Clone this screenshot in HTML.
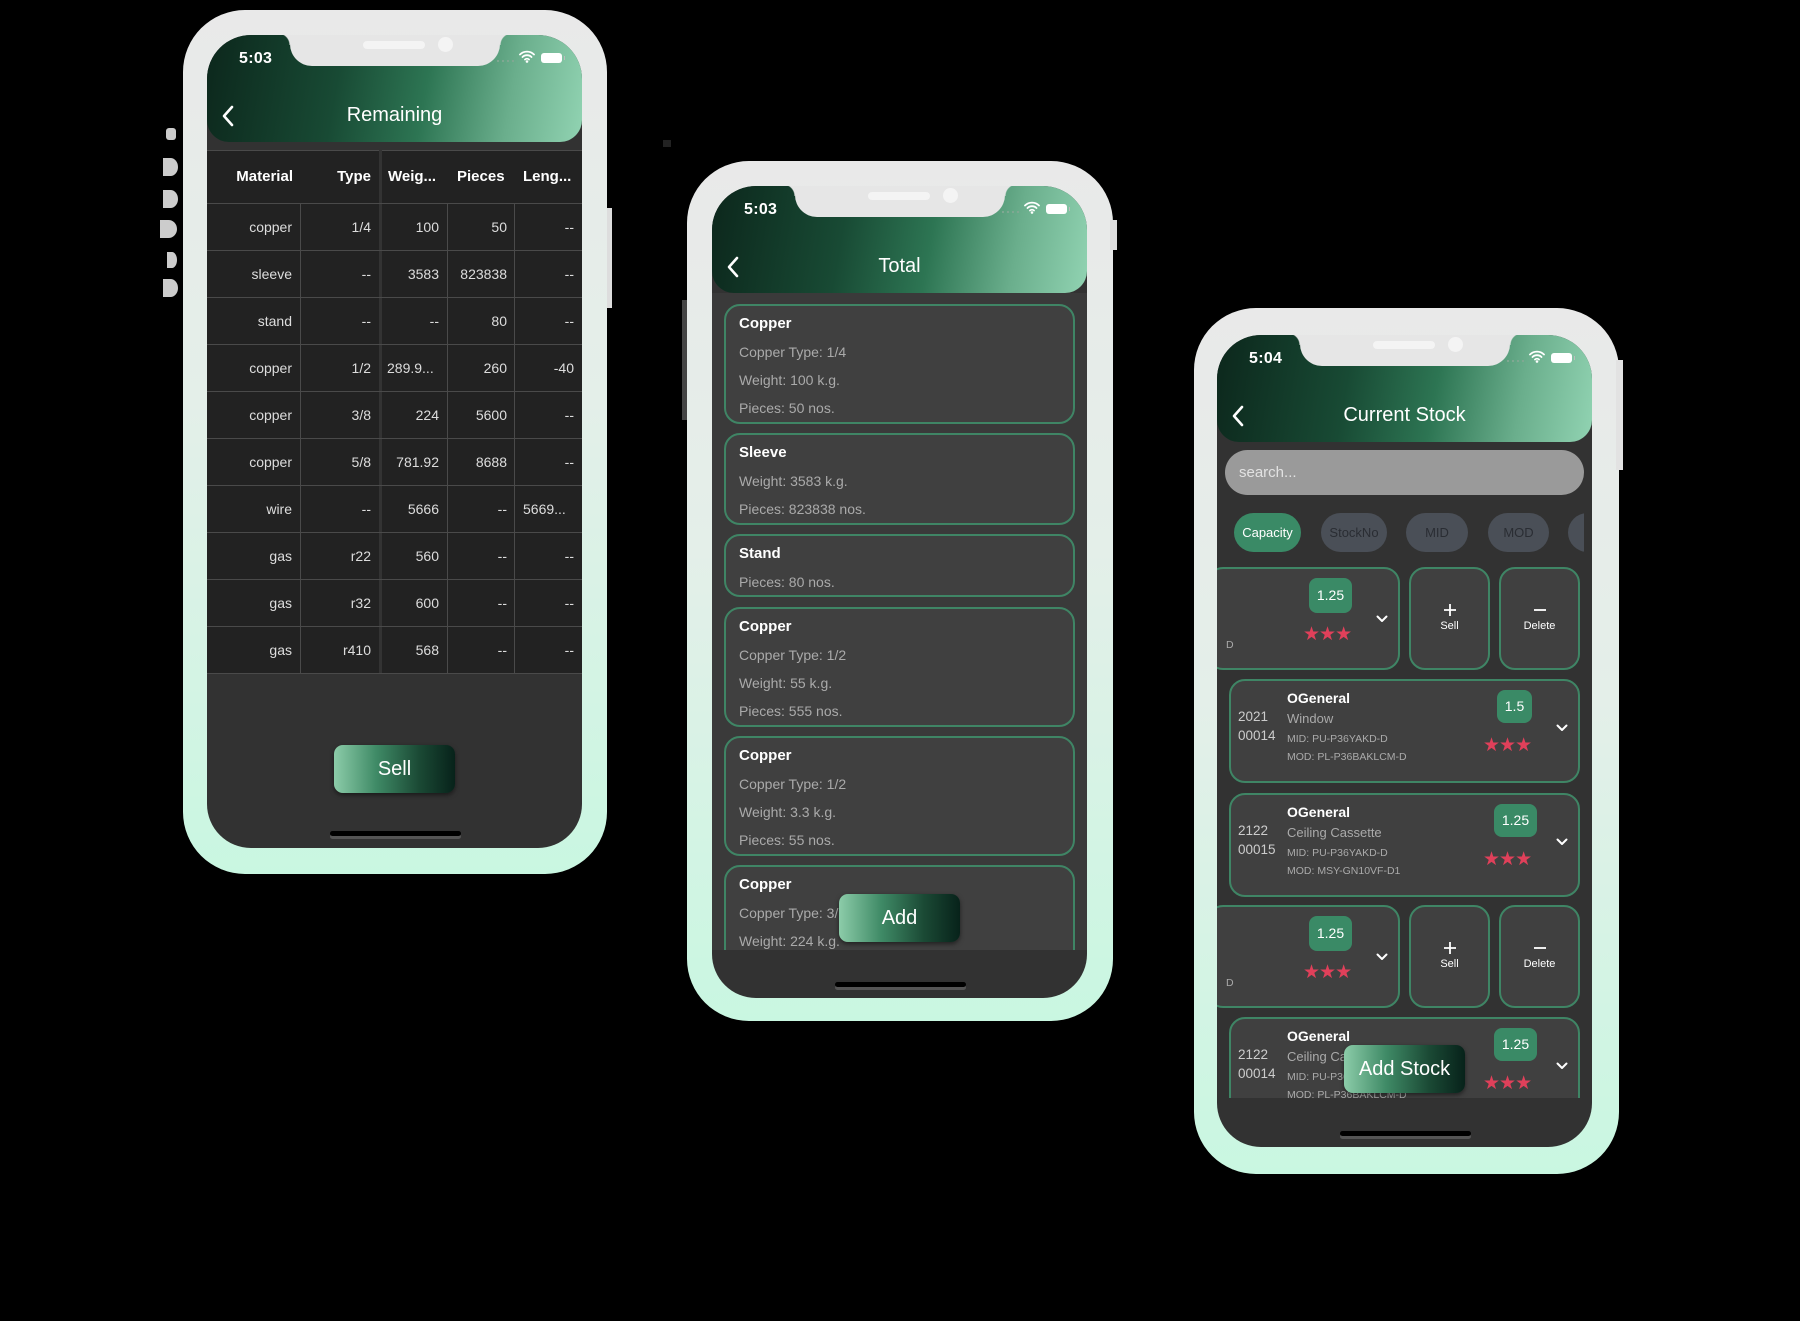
<!DOCTYPE html>
<html><head><meta charset="utf-8">
<style>
*{box-sizing:border-box;margin:0;padding:0}
html,body{width:1800px;height:1321px;background:#000;overflow:hidden;font-family:"Liberation Sans",sans-serif}
.frame{position:absolute;border-radius:62px;background:linear-gradient(180deg,#e9e9e9 0%,#e4efe9 45%,#c9f7e1 100%)}
.screen{position:absolute;width:375px;border-radius:44px;overflow:hidden;background:#323232}
.hdr{position:absolute;left:0;top:0;width:375px;height:107px;border-radius:0 0 22px 22px;background:linear-gradient(100deg,#0c271c 0%,#184a34 35%,#2d7553 58%,#6aae8c 80%,#91d3b2 100%)}
.notch{position:absolute;left:83px;top:-2px;width:210px;height:33px;background:#e6e6e6;border-radius:0 0 22px 22px}
.notch:before{content:"";position:absolute;left:-12px;top:0;width:12px;height:12px;background:radial-gradient(circle at 0 100%,transparent 11px,#e6e6e6 12px)}
.notch:after{content:"";position:absolute;right:-12px;top:0;width:12px;height:12px;background:radial-gradient(circle at 100% 100%,transparent 11px,#e6e6e6 12px)}
.spk{position:absolute;left:73px;top:8px;width:62px;height:8px;border-radius:4px;background:#f4f4f4}
.cam{position:absolute;left:148px;top:4px;width:15px;height:15px;border-radius:50%;background:#f4f4f4}
.time{position:absolute;left:32px;top:15px;color:#fff;font-size:16px;font-weight:bold;letter-spacing:.3px}
.dots{position:absolute;left:290px;top:25px;width:20px;height:2px;background:repeating-linear-gradient(90deg,#7fa892 0 2px,transparent 2px 5px)}
.bat{position:absolute;left:334px;top:18px;width:21px;height:10px;border-radius:3px;background:#fff}
.bat:after{content:"";position:absolute;right:-3px;top:3px;width:1px;height:4px;background:#bbb}
.wifi{position:absolute;left:312px;top:15px}
.back{position:absolute;left:14px;top:70px}
.title{position:absolute;left:0;width:375px;top:69px;text-align:center;color:#fff;font-size:20px}
.home{position:absolute;left:123px;width:131px;height:5px;border-radius:3px;background:#000;box-shadow:0 3px 0 #555}
.btn{position:absolute;width:121px;height:48px;border-radius:9px;background:linear-gradient(90deg,#8ccca9 0%,#3f8a66 35%,#1b4a35 70%,#07221a 100%);color:#fff;font-size:20px;text-align:center;line-height:48px;box-shadow:0 2px 5px rgba(0,0,0,.5)}
.tbl{position:absolute;left:0;top:115px;width:375px;height:524px;background:#222}
.hl{position:absolute;left:0;width:375px;height:1px;background:#4a4a4a}
.vl{position:absolute;width:1px;background:#4a4a4a}
.c{position:absolute;color:#ddd;font-size:14px;text-align:right;line-height:18px}
.h{position:absolute;color:#fff;font-size:15px;font-weight:bold;line-height:18px}
.card{position:absolute;left:12px;width:351px;border:2px solid #3f8565;border-radius:16px;background:#404040}
.ct{position:absolute;left:13px;color:#fff;font-weight:bold;font-size:15px;line-height:18px}
.cl{position:absolute;left:13px;color:#aaa;font-size:14px;line-height:18px}
.srch{position:absolute;left:8px;top:115px;width:359px;height:45px;border-radius:23px;background:#9a9a9a;color:#e2e2e2;font-size:15px;line-height:45px;padding-left:14px}
.chip{position:absolute;top:178px;height:39px;border-radius:20px;background:#4a4f57;color:#2a2d33;font-size:13px;line-height:39px;text-align:center}
.row{position:absolute;border:2px solid #3f8565;border-radius:16px;background:#404040}
.bdg{position:absolute;border-radius:8px;background:#3a8a66;color:#fff;font-size:14px;text-align:center}
.stars{position:absolute;color:#e0405a;font-size:19px;letter-spacing:-1px;line-height:18px}
.chev{position:absolute}
.t1{position:absolute;color:#fff;font-weight:bold;font-size:14px;line-height:16px}
.t2{position:absolute;color:#aaa;font-size:13px;line-height:16px}
.t3{position:absolute;color:#aaa;font-size:10.5px;line-height:14px}
.yr{position:absolute;color:#ccc;font-size:13.5px;line-height:16px}
.act{position:absolute;text-align:center;color:#fff;font-size:11px}
.blob{position:absolute;background:#ccc;border-radius:50%}
</style></head><body>

<div class="blob" style="left:166px;top:128px;width:10px;height:12px;border-radius:3px"></div>
<div class="blob" style="left:163px;top:158px;width:15px;height:18px;border-radius:0 50% 50% 0"></div>
<div class="blob" style="left:163px;top:190px;width:15px;height:18px;border-radius:0 50% 50% 0"></div>
<div class="blob" style="left:160px;top:220px;width:17px;height:18px;border-radius:0 50% 50% 0"></div>
<div class="blob" style="left:167px;top:252px;width:10px;height:16px;border-radius:0 50% 50% 0"></div>
<div class="blob" style="left:163px;top:279px;width:15px;height:18px;border-radius:0 50% 50% 0"></div>
<div style="position:absolute;left:604px;top:208px;width:8px;height:100px;background:#ddd"></div>
<div style="position:absolute;left:663px;top:140px;width:8px;height:7px;background:#222"></div>

<!-- PHONE 1 -->
<div class="frame" style="left:183px;top:10px;width:424px;height:864px"></div>
<div class="screen" style="left:207px;top:35px;height:813px">
  <div class="hdr"></div>
  <div class="notch"><div class="spk"></div><div class="cam"></div></div>
  <div class="time">5:03</div>
  <div class="dots"></div>
  <svg class="wifi" width="16" height="13" viewBox="0 0 16 13"><path d="M1 4.5A10 10 0 0 1 15 4.5M3.5 7A6.5 6.5 0 0 1 12.5 7M6 9.5a3 3 0 0 1 4 0" fill="none" stroke="#fff" stroke-width="1.8" stroke-linecap="round"/><circle cx="8" cy="11.5" r="1.3" fill="#fff"/></svg>
  <div class="bat"></div>
  <svg class="back" width="14" height="22" viewBox="0 0 14 22"><path d="M11 2L3 11l8 9" fill="none" stroke="#fff" stroke-width="2.6" stroke-linecap="round" stroke-linejoin="round"/></svg>
  <div class="title">Remaining</div>
  <div class="tbl">
    <div class="hl" style="top:0"></div>
    <div class="h" style="left:0;width:86px;top:18px;text-align:right">Material</div>
    <div class="h" style="left:90px;width:74px;top:18px;text-align:right">Type</div>
    <div class="h" style="left:181px;top:18px">Weig...</div>
    <div class="h" style="left:250px;top:18px">Pieces</div>
    <div class="h" style="left:316px;top:18px">Leng...</div>
    <div class="vl" style="left:172px;top:0;height:524px;width:3px;background:#333"></div>
    <div class="vl" style="left:93px;top:53px;height:471px"></div>
    <div class="vl" style="left:240px;top:53px;height:471px"></div>
    <div class="vl" style="left:307px;top:53px;height:471px"></div>
    <div class="hl" style="top:53px"></div><div class="hl" style="top:100px"></div><div class="hl" style="top:147px"></div><div class="hl" style="top:194px"></div><div class="hl" style="top:241px"></div><div class="hl" style="top:288px"></div><div class="hl" style="top:335px"></div><div class="hl" style="top:382px"></div><div class="hl" style="top:429px"></div><div class="hl" style="top:476px"></div><div class="hl" style="top:523px"></div>
  </div>
  <div id="rows1"></div>
  <div class="btn" style="left:127px;top:710px">Sell</div>
  <div class="home" style="top:796px"></div>
</div>

<!-- PHONE 2 -->
<div style="position:absolute;left:682px;top:300px;width:8px;height:120px;background:#444"></div>
<div class="frame" style="left:687px;top:161px;width:426px;height:860px"></div>
<div style="position:absolute;left:1110px;top:220px;width:7px;height:30px;background:#ddd"></div>
<div class="screen" style="left:712px;top:186px;height:812px">
  <div class="hdr"></div>
  <div class="notch"><div class="spk"></div><div class="cam"></div></div>
  <div class="time">5:03</div>
  <div class="dots"></div>
  <svg class="wifi" width="16" height="13" viewBox="0 0 16 13"><path d="M1 4.5A10 10 0 0 1 15 4.5M3.5 7A6.5 6.5 0 0 1 12.5 7M6 9.5a3 3 0 0 1 4 0" fill="none" stroke="#fff" stroke-width="1.8" stroke-linecap="round"/><circle cx="8" cy="11.5" r="1.3" fill="#fff"/></svg>
  <div class="bat"></div>
  <svg class="back" width="14" height="22" viewBox="0 0 14 22"><path d="M11 2L3 11l8 9" fill="none" stroke="#fff" stroke-width="2.6" stroke-linecap="round" stroke-linejoin="round"/></svg>
  <div class="title">Total</div>
  <div style="position:absolute;left:0;top:107px;width:375px;height:657px;background:#3a3a3a;overflow:hidden">
    <div class="card" style="top:11px;height:120px"><div class="ct" style="top:9px">Copper</div><div class="cl" style="top:37px">Copper Type: 1/4</div><div class="cl" style="top:65px">Weight: 100 k.g.</div><div class="cl" style="top:93px">Pieces: 50 nos.</div></div>
    <div class="card" style="top:140px;height:92px"><div class="ct" style="top:9px">Sleeve</div><div class="cl" style="top:37px">Weight: 3583 k.g.</div><div class="cl" style="top:65px">Pieces: 823838 nos.</div></div>
    <div class="card" style="top:241px;height:63px"><div class="ct" style="top:9px">Stand</div><div class="cl" style="top:37px">Pieces: 80 nos.</div></div>
    <div class="card" style="top:314px;height:120px"><div class="ct" style="top:9px">Copper</div><div class="cl" style="top:37px">Copper Type: 1/2</div><div class="cl" style="top:65px">Weight: 55 k.g.</div><div class="cl" style="top:93px">Pieces: 555 nos.</div></div>
    <div class="card" style="top:443px;height:120px"><div class="ct" style="top:9px">Copper</div><div class="cl" style="top:37px">Copper Type: 1/2</div><div class="cl" style="top:65px">Weight: 3.3 k.g.</div><div class="cl" style="top:93px">Pieces: 55 nos.</div></div>
    <div class="card" style="top:572px;height:120px"><div class="ct" style="top:9px">Copper</div><div class="cl" style="top:37px">Copper Type: 3/8</div><div class="cl" style="top:65px">Weight: 224 k.g.</div></div>
  </div>
  <div class="btn" style="left:127px;top:708px">Add</div>
  <div class="home" style="top:796px"></div>
</div>

<!-- PHONE 3 -->
<div class="frame" style="left:1194px;top:308px;width:425px;height:866px"></div>
<div style="position:absolute;left:1616px;top:360px;width:7px;height:110px;background:#e2e2e2"></div>
<div class="screen" style="left:1217px;top:335px;height:812px">
  <div class="hdr"></div>
  <div class="notch"><div class="spk"></div><div class="cam"></div></div>
  <div class="time">5:04</div>
  <div class="dots"></div>
  <svg class="wifi" width="16" height="13" viewBox="0 0 16 13"><path d="M1 4.5A10 10 0 0 1 15 4.5M3.5 7A6.5 6.5 0 0 1 12.5 7M6 9.5a3 3 0 0 1 4 0" fill="none" stroke="#fff" stroke-width="1.8" stroke-linecap="round"/><circle cx="8" cy="11.5" r="1.3" fill="#fff"/></svg>
  <div class="bat"></div>
  <svg class="back" width="14" height="22" viewBox="0 0 14 22"><path d="M11 2L3 11l8 9" fill="none" stroke="#fff" stroke-width="2.6" stroke-linecap="round" stroke-linejoin="round"/></svg>
  <div class="title">Current Stock</div>
  <div class="srch">search...</div>
  <div class="chip" style="left:17px;width:67px;background:#3a8a66;color:#fff">Capacity</div>
  <div class="chip" style="left:104px;width:66px">StockNo</div>
  <div class="chip" style="left:189px;width:62px">MID</div>
  <div class="chip" style="left:271px;width:61px">MOD</div>
  <div style="position:absolute;left:351px;top:178px;width:16px;height:39px;overflow:hidden"><div class="chip" style="left:0;top:0;width:40px"></div></div>
  <div style="position:absolute;left:0;top:225px;width:375px;height:538px;overflow:hidden;background:#323232" id="list"></div>
  <div class="btn" style="left:127px;top:710px">Add Stock</div>
  <div class="home" style="top:796px"></div>
</div>

<script>
(function(){
var d=[["copper","1/4","100","50","--"],["sleeve","--","3583","823838","--"],["stand","--","--","80","--"],["copper","1/2","289.9...","260","-40"],["copper","3/8","224","5600","--"],["copper","5/8","781.92","8688","--"],["wire","--","5666","--","5669..."],["gas","r22","560","--","--"],["gas","r32","600","--","--"],["gas","r410","568","--","--"]];
var h="";
d.forEach(function(r,i){var y=115+53+i*47+15;
 h+='<div class="c" style="left:0;width:85px;top:'+y+'px">'+r[0]+'</div>';
 h+='<div class="c" style="left:94px;width:70px;top:'+y+'px">'+r[1]+'</div>';
 if(r[2].indexOf("...")>0) h+='<div class="c" style="left:180px;text-align:left;top:'+y+'px">'+r[2]+'</div>';
 else h+='<div class="c" style="left:175px;width:57px;top:'+y+'px">'+r[2]+'</div>';
 h+='<div class="c" style="left:241px;width:59px;top:'+y+'px">'+r[3]+'</div>';
 if(r[4].indexOf("...")>0) h+='<div class="c" style="left:316px;text-align:left;top:'+y+'px">'+r[4]+'</div>';
 else h+='<div class="c" style="left:308px;width:59px;top:'+y+'px">'+r[4]+'</div>';
});
document.getElementById("rows1").innerHTML=h;
var chev='<svg width="12" height="8" viewBox="0 0 12 8"><path d="M1.5 1.5L6 6l4.5-4.5" fill="none" stroke="#fff" stroke-width="2" stroke-linecap="round" stroke-linejoin="round"/></svg>';
var plus='<svg width="14" height="14" viewBox="0 0 14 14"><path d="M7 1v12M1 7h12" stroke="#fff" stroke-width="1.8"/></svg>';
var minus='<svg width="14" height="14" viewBox="0 0 14 14"><path d="M1 7h12" stroke="#fff" stroke-width="1.8"/></svg>';
function full(T,y1,y2,sub,mid,mod,b){var bw=b.length>3?43:35,bx=b.length>3?277:280;
 return '<div class="row" style="left:12px;top:'+T+'px;width:351px;height:104px">'+
 '<div class="yr" style="left:7px;top:28px">'+y1+'</div><div class="yr" style="left:7px;top:47px">'+y2+'</div>'+
 '<div class="t1" style="left:56px;top:9px">OGeneral</div><div class="t2" style="left:56px;top:30px">'+sub+'</div>'+
 '<div class="t3" style="left:56px;top:51px">MID: '+mid+'</div><div class="t3" style="left:56px;top:69px">MOD: '+mod+'</div>'+
 '<div class="bdg" style="left:'+(bx-14)+'px;top:9px;width:'+bw+'px;height:33px;line-height:33px">'+b+'</div>'+
 '<div class="stars" style="left:252px;top:56px">★★★</div>'+
 '<div class="chev" style="left:325px;top:38px">'+chev+'</div></div>';}
function swiped(T){return '<div class="row" style="left:-10px;top:'+T+'px;width:193px;height:103px">'+
 '<div class="bdg" style="left:100px;top:9px;width:43px;height:35px;line-height:35px">1.25</div>'+
 '<div class="stars" style="left:94px;top:57px">★★★</div>'+
 '<div class="t3" style="left:17px;top:69px">D</div>'+
 '<div class="chev" style="left:167px;top:41px">'+chev+'</div></div>'+
 '<div class="row" style="left:192px;top:'+T+'px;width:81px;height:103px"><div class="act" style="left:0;width:77px;top:34px">'+plus+'<br>Sell</div></div>'+
 '<div class="row" style="left:282px;top:'+T+'px;width:81px;height:103px"><div class="act" style="left:0;width:77px;top:34px">'+minus+'<br>Delete</div></div>';}
var L="";
L+=swiped(7);
L+=full(119,"2021","00014","Window","PU-P36YAKD-D","PL-P36BAKLCM-D","1.5");
L+=full(233,"2122","00015","Ceiling Cassette","PU-P36YAKD-D","MSY-GN10VF-D1","1.25");
L+=swiped(345);
L+=full(457,"2122","00014","Ceiling Cassette","PU-P36YAKD-D","PL-P36BAKLCM-D","1.25");
document.getElementById("list").innerHTML=L;
})();
</script>
</body></html>
